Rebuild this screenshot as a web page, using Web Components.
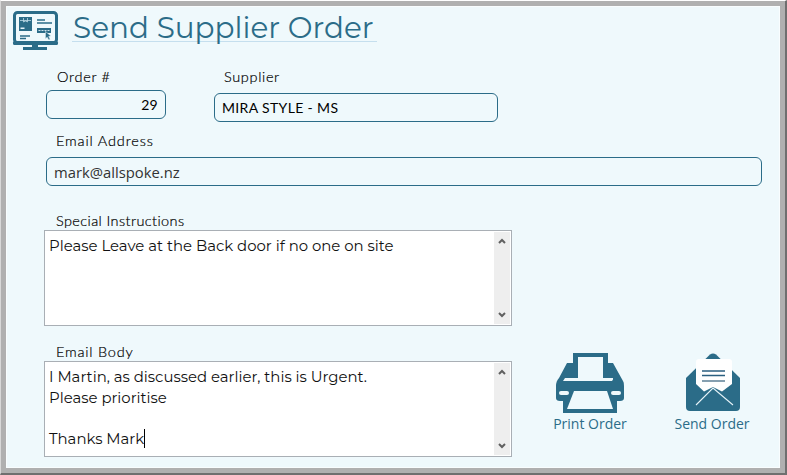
<!DOCTYPE html>
<html><head><meta charset="utf-8"><style>
html,body{margin:0;padding:0;background:#fff}
</style></head><body>
<order-window></order-window>
<script>
const TEAL='#2b6c88', BG='#eff9fc';
class TitleBar extends HTMLElement{constructor(){super();this.attachShadow({mode:'open'}).innerHTML=`<style>
:host{display:flex;align-items:flex-start;height:45px}
svg{display:block;margin:5px 0 0 6px;flex:none}
h1{margin:1px 0 0 13px;padding:0 3px 0 1px;font:400 29.5px/40px "Montserrat","Open Sans",sans-serif;color:${TEAL};border-bottom:1px solid #c5dfee;height:34px;white-space:nowrap}
</style>
<svg width="47" height="40" viewBox="0 0 47 40"><rect x="2.5" y="1.5" width="42" height="30" rx="3" fill="none" stroke="${TEAL}" stroke-width="3"/><rect x="1" y="30" width="45" height="4" rx="1.5" fill="${TEAL}"/><rect x="20" y="34" width="6" height="3" fill="${TEAL}"/><rect x="11" y="36" width="24" height="3" fill="${TEAL}"/><rect x="7" y="6" width="13" height="14" fill="${TEAL}"/><path d="M11.5 7v4l2-1 2 1V7M8 9.500h11" stroke="#bcd8e4" fill="none" stroke-width=".8"/><rect x="8.500" y="16.500" width="4" height="1.500" fill="#e8f4f9"/><path d="M25 9h8M25 12h15" stroke="${TEAL}" stroke-width="1.300"/><rect x="25" y="17" width="14" height="5" fill="${TEAL}"/><path d="M26.500 19.500h11" stroke="#cfe3ec" stroke-dasharray="2 1"/><path d="M33.500 20.500l5.500 4.500-2.300.5 1.500 2.800-1.500.7-1.500-2.800-1.800 1.500z" fill="${TEAL}" stroke="${BG}" stroke-width=".5"/><path d="M8 25h10M8 27.500h6" stroke="${TEAL}" stroke-width="1.300"/></svg><h1><slot></slot></h1>`}}
customElements.define('title-bar',TitleBar);

class OrderWindow extends HTMLElement{constructor(){super();this.attachShadow({mode:'open'}).innerHTML=`<style>
:host{display:block;width:787px;height:475px;box-sizing:border-box;border-top:1px solid #fff;border-left:1px solid #d8d8d8;border-right:2px solid #6f6f6f;border-bottom:2px solid #6f6f6f;font-family:"Lato",sans-serif;overflow:hidden}
.frame{height:100%;box-sizing:border-box;border:5px solid #b0b0b0;background:${BG};box-shadow:inset 0 0 0 1px #f9fdfe}
</style><div class="frame"><slot></slot></div>`}}
customElements.define('order-window',OrderWindow);

class FormField extends HTMLElement{constructor(){super();this.attachShadow({mode:'open'}).innerHTML=`<style>
:host{display:block;font:300 14.5px/18px "Lato",sans-serif;color:#000}
label{display:block;padding-left:var(--lp,11px);letter-spacing:var(--ls,.4px);height:var(--lh,18px);-webkit-text-stroke:.2px #000}
.box{box-sizing:border-box;height:var(--bh,29px);border:1px solid ${TEAL};border-radius:6px;padding:0 7px;display:flex;align-items:center;font:var(--bf,14px "Open Sans",sans-serif);color:var(--bc,#000);justify-content:var(--bj,flex-start);letter-spacing:var(--bs,0);white-space:pre}
</style><label>${this.getAttribute('label')}</label><div class="box"><slot></slot></div>`}}
customElements.define('form-field',FormField);

const arrow=d=>`<svg width="10" height="6" viewBox="0 0 10 6"><path d="${d}" fill="none" stroke="#606060" stroke-width="2"/></svg>`;
class MemoField extends HTMLElement{constructor(){super();this.attachShadow({mode:'open'}).innerHTML=`<style>
:host{display:block;font:300 14.5px/18px "Lato",sans-serif;color:#000}
label{display:block;padding-left:12px;letter-spacing:var(--ls,.4px);height:18px;line-height:18px;-webkit-text-stroke:.2px #000}
.box{box-sizing:border-box;width:468px;height:96px;border:1px solid #a9afb5;background:#fff;display:flex}
.txt{flex:1;padding:5px 4px;font:14.9px/20.6px "Montserrat","Open Sans",sans-serif;color:#111;white-space:pre;overflow:hidden}
.bar{flex:none;width:16px;margin:1px;background:#eee;display:flex;flex-direction:column;justify-content:space-between;align-items:center;padding:6px 0;box-sizing:border-box}
</style><label>${this.getAttribute('label')}</label><div class="box"><div class="txt"><slot></slot></div><div class="bar">${arrow('M2 5L5 2 8 5')}${arrow('M2 1L5 4 8 1')}</div></div>`}}
customElements.define('memo-field',MemoField);

class ActionButton extends HTMLElement{constructor(){super();this.attachShadow({mode:'open'}).innerHTML=`<style>
:host{display:flex;flex-direction:column;align-items:center;width:90px;font:14px/18px "Open Sans",sans-serif;color:${TEAL}}
.i{height:61px;display:block}
.t{margin-top:1px;white-space:nowrap}
</style><div class="i"><slot name="icon"></slot></div><div class="t"><slot></slot></div>`}}
customElements.define('action-button',ActionButton);

class SupplierForm extends HTMLElement{constructor(){super();this.attachShadow({mode:'open'}).innerHTML=`<style>
:host{display:block;padding:0 0 0 38px}
</style><slot></slot>`}}
customElements.define('supplier-form',SupplierForm);

document.querySelector('order-window').innerHTML=`
<title-bar>Send Supplier Order</title-bar>
<supplier-form>
 <div style="display:flex;padding:17px 0 0 2px;height:81px;box-sizing:border-box">
  <form-field label="Order #" style="width:120px;--ls:.7px;--lh:22px;--bh:29px;--bj:flex-end;--bf:400 14px 'Lato',sans-serif;--bs:.3px">29</form-field>
  <form-field label="Supplier" style="width:284px;margin-left:48px;--ls:.65px;--lh:25px;--lp:10px;--bf:400 14px 'Lato',sans-serif;--bs:.35px">MIRA STYLE - MS</form-field>
 </div>
 <form-field label="Email Address" style="margin-left:2px;width:716px;--ls:.85px;--lp:10px;--lh:25px;--bc:#333;--bf:14.8px 'Open Sans',sans-serif">mark@allspoke.nz</form-field>
 <div style="display:flex;align-items:flex-end;margin-top:26px">
  <div style="display:flex;flex-direction:column;gap:17px">
   <memo-field label="Special Instructions">Please Leave at the Back door if no one on site</memo-field>
   <memo-field label="Email Body" style="--ls:.8px">I Martin, as discussed earlier, this is Urgent.
Please prioritise

Thanks Mark<span style="display:inline-block;width:1px;height:19px;background:#000;vertical-align:-4px"></span></memo-field>
  </div>
  <div style="display:flex;padding-left:33px;gap:32px;margin-bottom:24px">
   <action-button>
    <svg slot="icon" width="68" height="61" viewBox="0 0 68 61" style="display:block"><path fill="${TEAL}" d="M17 0H52V10H57L67 28Q68 29 68 33V45Q68 48 64 48H61V60H7V48H4Q0 48 0 45V33Q0 28 3 25L11 10H17Z"/><path fill="${BG}" d="M22 4H47V25H57V26.500L56 28H7L9 25H22Z"/><path fill="${BG}" d="M18 38H51L57 56H11Z"/><rect x="3" y="38" width="10" height="4" rx="2" fill="${BG}"/><rect x="55" y="38" width="10" height="4" rx="2" fill="${BG}"/></svg>
    Print Order</action-button>
   <action-button>
    <svg slot="icon" width="55" height="61" viewBox="0 0 55 61" style="display:block;margin-left:2px"><path fill="${TEAL}" d="M24 1.500Q27-.5 30 1.500L54 25V54Q54 58 50 58H4Q0 58 0 54V25Z"/><path fill="#fff" d="M10 9Q10 6 13 6H43Q46 6 46 9V31L36 38.500 27 34 18 38.500 10 31Z"/><path d="M16 18h23M16 22.500h23" stroke="#2b5f80" stroke-width="1.300"/><path d="M16 28h23" stroke="#5c7f96" stroke-width="1.500"/><path d="M10 52L27 35 47 52" fill="none" stroke="#e6f3f8" stroke-width="1.100"/></svg>
    Send Order</action-button>
  </div>
 </div>
</supplier-form>`;
</script></body></html>
